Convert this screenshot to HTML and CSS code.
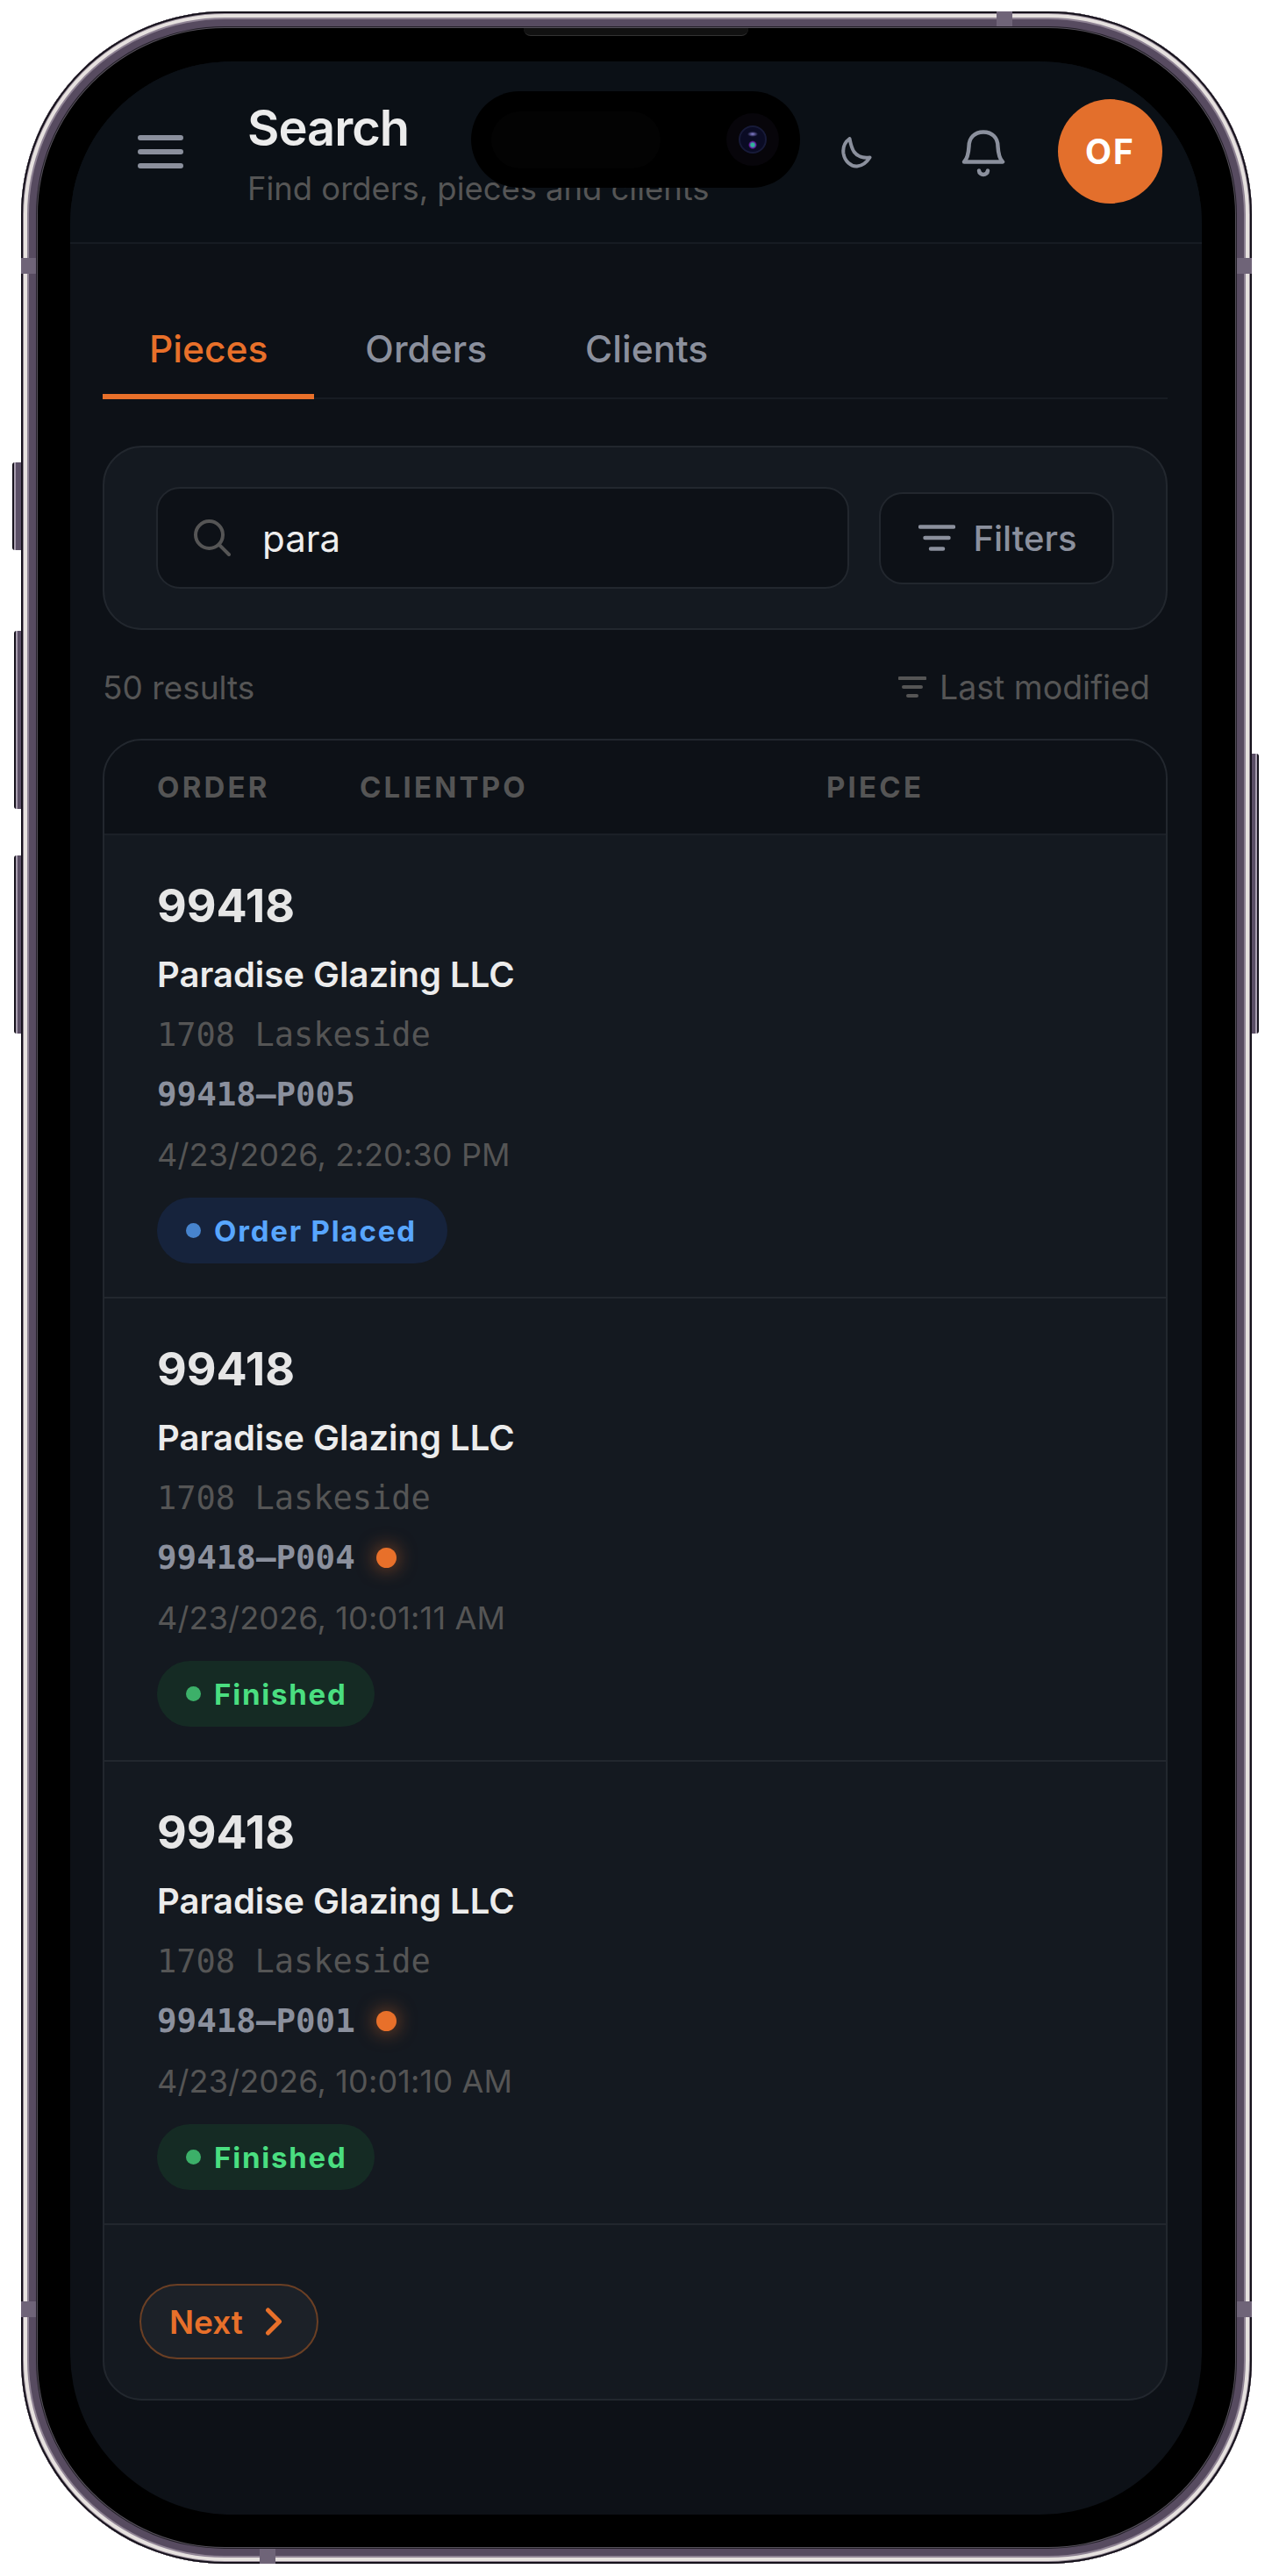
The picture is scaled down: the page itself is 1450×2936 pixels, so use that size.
FILE: index.html
```html
<!DOCTYPE html>
<html lang="en">
<head>
    <meta charset="UTF-8">
    <meta name="viewport" content="width=device-width, initial-scale=1.0">
    <title>Search</title>
    <link rel="stylesheet" href="styles.css">
</head>
<body>
    <div class="phone">
        <!-- Side buttons and antenna bands -->
        <span class="side-btn btn-action"></span>
        <span class="side-btn btn-vol-up"></span>
        <span class="side-btn btn-vol-down"></span>
        <span class="side-btn btn-power"></span>
        <span class="band band-left-top"></span>
        <span class="band band-right-top"></span>
        <span class="band band-left-bottom"></span>
        <span class="band band-right-bottom"></span>
        <span class="band band-top"></span>
        <span class="band band-bottom"></span>
        <span class="speaker"></span>

        <div class="screen">
            <div class="island">
                <span class="island-sensor"></span>
                <span class="island-lens"><span class="island-glass"></span></span>
            </div>

            <header class="topbar">
                <button class="icon-btn menu-btn">
                    <svg width="52" height="38" viewBox="0 0 52 38"><path d="M3 3h46M3 19h46M3 35h46" stroke="#8b909d" stroke-width="6" stroke-linecap="round" fill="none"/></svg>
                </button>
                <div class="title-block">
                    <h1>Search</h1>
                    <p>Find orders, pieces and clients</p>
                </div>
                <button class="icon-btn moon-btn">
                    <svg width="36" height="38" viewBox="0 0 36 38"><path d="M10.500 3C5 7 2.500 13 3.500 20C5 29 12 35 19 34.500C25 34 30 30 33.500 24.500C26 25.500 19 23 15.500 18C12.500 13.500 11.500 8 10.500 3Z" stroke="#8b909d" stroke-width="4" stroke-linejoin="round" fill="none"/></svg>
                </button>
                <button class="icon-btn bell-btn">
                    <svg width="50" height="56" viewBox="0 0 50 56"><path d="M3 37.500C6.500 34 8 29 8.500 20C8.500 10 15 3.500 25 3.500C35 3.500 41.500 10 41.500 20C42 29 43.500 34 47 37.500Z" stroke="#8b909d" stroke-width="4.500" stroke-linejoin="round" fill="none"/><path d="M20 47.500C20.500 53.500 29.500 53.500 30 47.500" stroke="#8b909d" stroke-width="4.500" stroke-linecap="round" fill="none"/></svg>
                </button>
                <div class="avatar">OF</div>
            </header>

            <main class="content">
                <nav class="tabs">
                    <a class="tab active">Pieces</a>
                    <a class="tab">Orders</a>
                    <a class="tab">Clients</a>
                </nav>

                <section class="search-card">
                    <div class="search-input">
                        <svg width="44" height="44" viewBox="0 0 44 44"><circle cx="18.500" cy="18.500" r="15.500" stroke="#555" stroke-width="4" fill="none"/><path d="M30 30L41 41" stroke="#555" stroke-width="4" stroke-linecap="round"/></svg>
                        <span>para</span>
                    </div>
                    <button class="filters-btn">
                        <svg width="42" height="30" viewBox="0 0 42 30"><path d="M2 2.500h38M7.500 15h27M14 27.500h14" stroke="#8b909d" stroke-width="4.500" stroke-linecap="round" fill="none"/></svg>
                        Filters
                    </button>
                </section>

                <div class="results-bar">
                    <span>50 results</span>
                    <span class="sort">
                        <svg width="32" height="24" viewBox="0 0 32 24"><path d="M1.500 2h29M6 12h20M11 22h10" stroke="#555" stroke-width="4" stroke-linecap="round" fill="none"/></svg>
                        Last modified
                    </span>
                </div>

                <section class="table-card">
                    <div class="table-head">
                        <span class="col-order">ORDER</span>
                        <span class="col-client">CLIENTPO</span>
                        <span>PIECE</span>
                    </div>

                    <article class="row">
                        <div class="order-no">99418</div>
                        <div class="client">Paradise Glazing LLC</div>
                        <div class="address">1708 Laskeside</div>
                        <div class="piece">99418–P005</div>
                        <div class="date">4/23/2026, 2:20:30 PM</div>
                        <span class="pill pill-blue">Order Placed</span>
                    </article>

                    <article class="row">
                        <div class="order-no">99418</div>
                        <div class="client">Paradise Glazing LLC</div>
                        <div class="address">1708 Laskeside</div>
                        <div class="piece">99418–P004<span class="flag"></span></div>
                        <div class="date">4/23/2026, 10:01:11 AM</div>
                        <span class="pill pill-green">Finished</span>
                    </article>

                    <article class="row">
                        <div class="order-no">99418</div>
                        <div class="client">Paradise Glazing LLC</div>
                        <div class="address">1708 Laskeside</div>
                        <div class="piece">99418–P001<span class="flag"></span></div>
                        <div class="date">4/23/2026, 10:01:10 AM</div>
                        <span class="pill pill-green">Finished</span>
                    </article>

                    <div class="pager">
                        <button class="next-btn">
                            Next
                            <svg width="20" height="32" viewBox="0 0 20 32"><path d="M3.500 3L16.500 16L3.500 29" stroke="#e8702a" stroke-width="5" stroke-linecap="round" stroke-linejoin="round" fill="none"/></svg>
                        </button>
                    </div>
                </section>
            </main>
        </div>
    </div>
</body>
</html>
```

FILE: styles.css
```css
* {
    box-sizing: border-box;
}

body {
    margin: 0;
    padding: 13px 0 0 24px;
    background: #ffffff;
    font-family: Inter, "Liberation Sans", sans-serif;
}

button {
    font-family: inherit;
    border: none;
    background: none;
    padding: 0;
}

/* Device frame */
.phone {
    position: relative;
    width: 1403px;
    height: 2909px;
    padding: 57px 57px 56px 56px;
    background: #000000;
    border-radius: 232px;
    box-shadow:
        inset 0 0 0 2px #15111b,
        inset 0 0 0 3px #8c818e,
        inset 0 0 0 7px #e6e1df,
        inset 0 0 0 9px #8f8394,
        inset 0 0 0 17px #574b60,
        inset 0 0 0 18px #231f28,
        inset 0 0 0 19px #55505a;
}

.side-btn {
    position: absolute;
    background: linear-gradient(90deg, #17131d 0 2px, #a79dae 2px 4px, #5b4f66 4px);
    border-radius: 3px 0 0 3px;
}

.btn-action {
    left: -10px;
    top: 514px;
    width: 10px;
    height: 100px;
}

.btn-vol-up {
    left: -8px;
    top: 706px;
    width: 8px;
    height: 203px;
}

.btn-vol-down {
    left: -8px;
    top: 962px;
    width: 8px;
    height: 203px;
}

.btn-power {
    right: -8px;
    top: 846px;
    width: 8px;
    height: 319px;
    transform: scaleX(-1);
}

.band {
    position: absolute;
    background: #6f6478;
}

.band-left-top,
.band-right-top,
.band-left-bottom,
.band-right-bottom {
    width: 17px;
    height: 18px;
}

.band-left-top {
    left: 0;
    top: 281px;
}

.band-right-top {
    right: 0;
    top: 281px;
}

.band-left-bottom {
    left: 0;
    top: 2610px;
}

.band-right-bottom {
    right: 0;
    top: 2610px;
}

.band-top,
.band-bottom {
    width: 18px;
    height: 17px;
}

.band-top {
    top: 0;
    left: 1112px;
}

.band-bottom {
    bottom: 0;
    left: 272px;
}

.speaker {
    position: absolute;
    top: 19px;
    left: 573px;
    width: 256px;
    height: 9px;
    background: #111111;
    border-bottom: 1px solid #333333;
    border-radius: 0 0 8px 8px;
}

/* Screen */
.screen {
    position: relative;
    height: 100%;
    background: #0d1117;
    border-radius: 184px;
    overflow: hidden;
    color: #e6e6e6;
}

.island {
    position: absolute;
    top: 34px;
    left: 457px;
    width: 375px;
    height: 110px;
    background: #000000;
    border-radius: 55px;
}

.island-sensor {
    position: absolute;
    left: 23px;
    top: 23px;
    width: 193px;
    height: 65px;
    background: #030303;
    border-radius: 33px;
}

.island-lens {
    position: absolute;
    left: 291px;
    top: 25px;
    width: 60px;
    height: 60px;
    background: #07050a;
    border-radius: 50%;
}

.island-glass {
    position: absolute;
    left: 14px;
    top: 14px;
    width: 32px;
    height: 32px;
    border-radius: 50%;
    border: 2px solid #171a38;
    background:
        radial-gradient(ellipse 6px 3px at 50% 28%, #8a84d8, transparent),
        radial-gradient(ellipse 5px 5px at 50% 72%, #2fb59a 0 40%, #6a22a8 70%, transparent),
        #0a0b24;
}

.topbar {
    display: flex;
    align-items: center;
    height: 208px;
    padding-left: 77px;
    padding-right: 45px;
    background: #0b1016;
    border-bottom: 2px solid #171c23;
}

.icon-btn {
    display: flex;
    flex: none;
}

.menu-btn {
    margin-right: 73px;
}

.title-block {
    flex: 1;
    padding-top: 3px;
}

.title-block h1 {
    margin: 0;
    font-size: 56px;
    line-height: 68px;
    font-weight: 600;
    color: #ececec;
    letter-spacing: -1px;
}

.title-block p {
    margin: 13px 0 0;
    font-size: 36.400px;
    line-height: 44px;
    color: #555555;
}

.moon-btn {
    margin-right: 102px;
    margin-top: 2px;
}

.bell-btn {
    margin-right: 60px;
    margin-top: 4px;
}

.avatar {
    flex: none;
    display: flex;
    align-items: center;
    justify-content: center;
    width: 119px;
    height: 119px;
    margin-top: -2px;
    border-radius: 50%;
    background: #e36f2c;
    color: #ffffff;
    font-size: 39px;
    font-weight: 700;
    letter-spacing: 2px;
}

/* Main column */
.content {
    padding: 0 39px 0 37px;
}

.tabs {
    display: flex;
    gap: 4px;
    margin-top: 93px;
    border-bottom: 2px solid #171c23;
}

.tab {
    padding: 0 54px 24px;
    margin-bottom: -2px;
    font-size: 42.500px;
    line-height: 54px;
    font-weight: 500;
    color: #8b909d;
    border-bottom: 6px solid transparent;
}

.tab.active {
    padding: 0 53px 24px;
    color: #e8702a;
    border-bottom-color: #e8702a;
}

.search-card {
    display: flex;
    align-items: center;
    justify-content: space-between;
    height: 210px;
    margin-top: 53px;
    padding: 0 59px 0 59px;
    background: #141920;
    border: 2px solid #22272e;
    border-radius: 45px;
}

.search-input {
    display: flex;
    align-items: center;
    gap: 35px;
    width: 790px;
    height: 116px;
    padding-left: 40px;
    background: #0d1117;
    border: 2px solid #22272e;
    border-radius: 27px;
    font-size: 42px;
    color: #eeeeee;
}

.filters-btn {
    display: flex;
    align-items: center;
    justify-content: center;
    gap: 20px;
    width: 268px;
    height: 105px;
    padding-left: 3px;
    background: #0d1117;
    border: 2px solid #22272e;
    border-radius: 27px;
    font-size: 40px;
    font-weight: 500;
    color: #8b909d;
}

.results-bar {
    display: flex;
    align-items: center;
    justify-content: space-between;
    height: 124px;
    padding: 6px 20px 0 0;
    font-size: 37px;
    color: #555555;
}

.sort {
    display: flex;
    align-items: center;
    gap: 15px;
    font-size: 37.500px;
}

/* Results table */
.table-card {
    background: #141920;
    border: 2px solid #22272e;
    border-radius: 45px;
    overflow: hidden;
}

.table-head {
    display: flex;
    align-items: center;
    height: 108px;
    padding-left: 60px;
    background: #0d1117;
    border-bottom: 2px solid #1b2027;
    font-size: 33px;
    font-weight: 700;
    letter-spacing: 3.200px;
    color: #555555;
}

.col-order {
    width: 231px;
}

.col-client {
    width: 532px;
}

.row {
    height: 528px;
    padding: 51px 60px 0;
    border-bottom: 2px solid #22272e;
}

.order-no {
    font-size: 52px;
    line-height: 60px;
    font-weight: 700;
    color: #e6e6e6;
}

.client {
    margin-top: 24px;
    font-size: 40px;
    line-height: 48px;
    font-weight: 600;
    color: #ececec;
}

.address {
    margin-top: 22px;
    font-family: "DejaVu Sans Mono", monospace;
    font-size: 37px;
    line-height: 46px;
    color: #555555;
}

.piece {
    display: flex;
    align-items: center;
    margin-top: 21px;
    font-family: "DejaVu Sans Mono", monospace;
    font-size: 37.500px;
    line-height: 46px;
    font-weight: 700;
    color: #8b909d;
}

.flag {
    width: 23px;
    height: 23px;
    margin-left: 24px;
    border-radius: 50%;
    background: #e8702a;
    box-shadow: 0 0 22px rgba(232, 112, 42, 0.65);
}

.date {
    margin-top: 23px;
    font-size: 36px;
    line-height: 46px;
    letter-spacing: 0.150px;
    color: #555555;
}

.pill {
    display: inline-flex;
    align-items: center;
    gap: 15px;
    height: 75px;
    margin-top: 26px;
    padding: 0 31px 0 33px;
    border-radius: 38px;
    font-size: 33px;
    font-weight: 700;
    letter-spacing: 1.800px;
}

.pill::before {
    content: "";
    width: 17px;
    height: 17px;
    border-radius: 50%;
    background: currentColor;
    opacity: 0.75;
}

.pill-blue {
    padding-right: 35px;
    background: #16233c;
    color: #58a6ff;
}

.pill-green {
    background: #152b24;
    color: #4ade80;
}

.pager {
    padding: 67px 0 45px 40px;
}

.next-btn {
    display: inline-flex;
    align-items: center;
    gap: 25px;
    height: 86px;
    padding: 0 39px 0 32px;
    background: #1c2128;
    border: 2px solid #6b3f24;
    border-radius: 43px;
    font-size: 37px;
    font-weight: 600;
    color: #e8702a;
}
```
